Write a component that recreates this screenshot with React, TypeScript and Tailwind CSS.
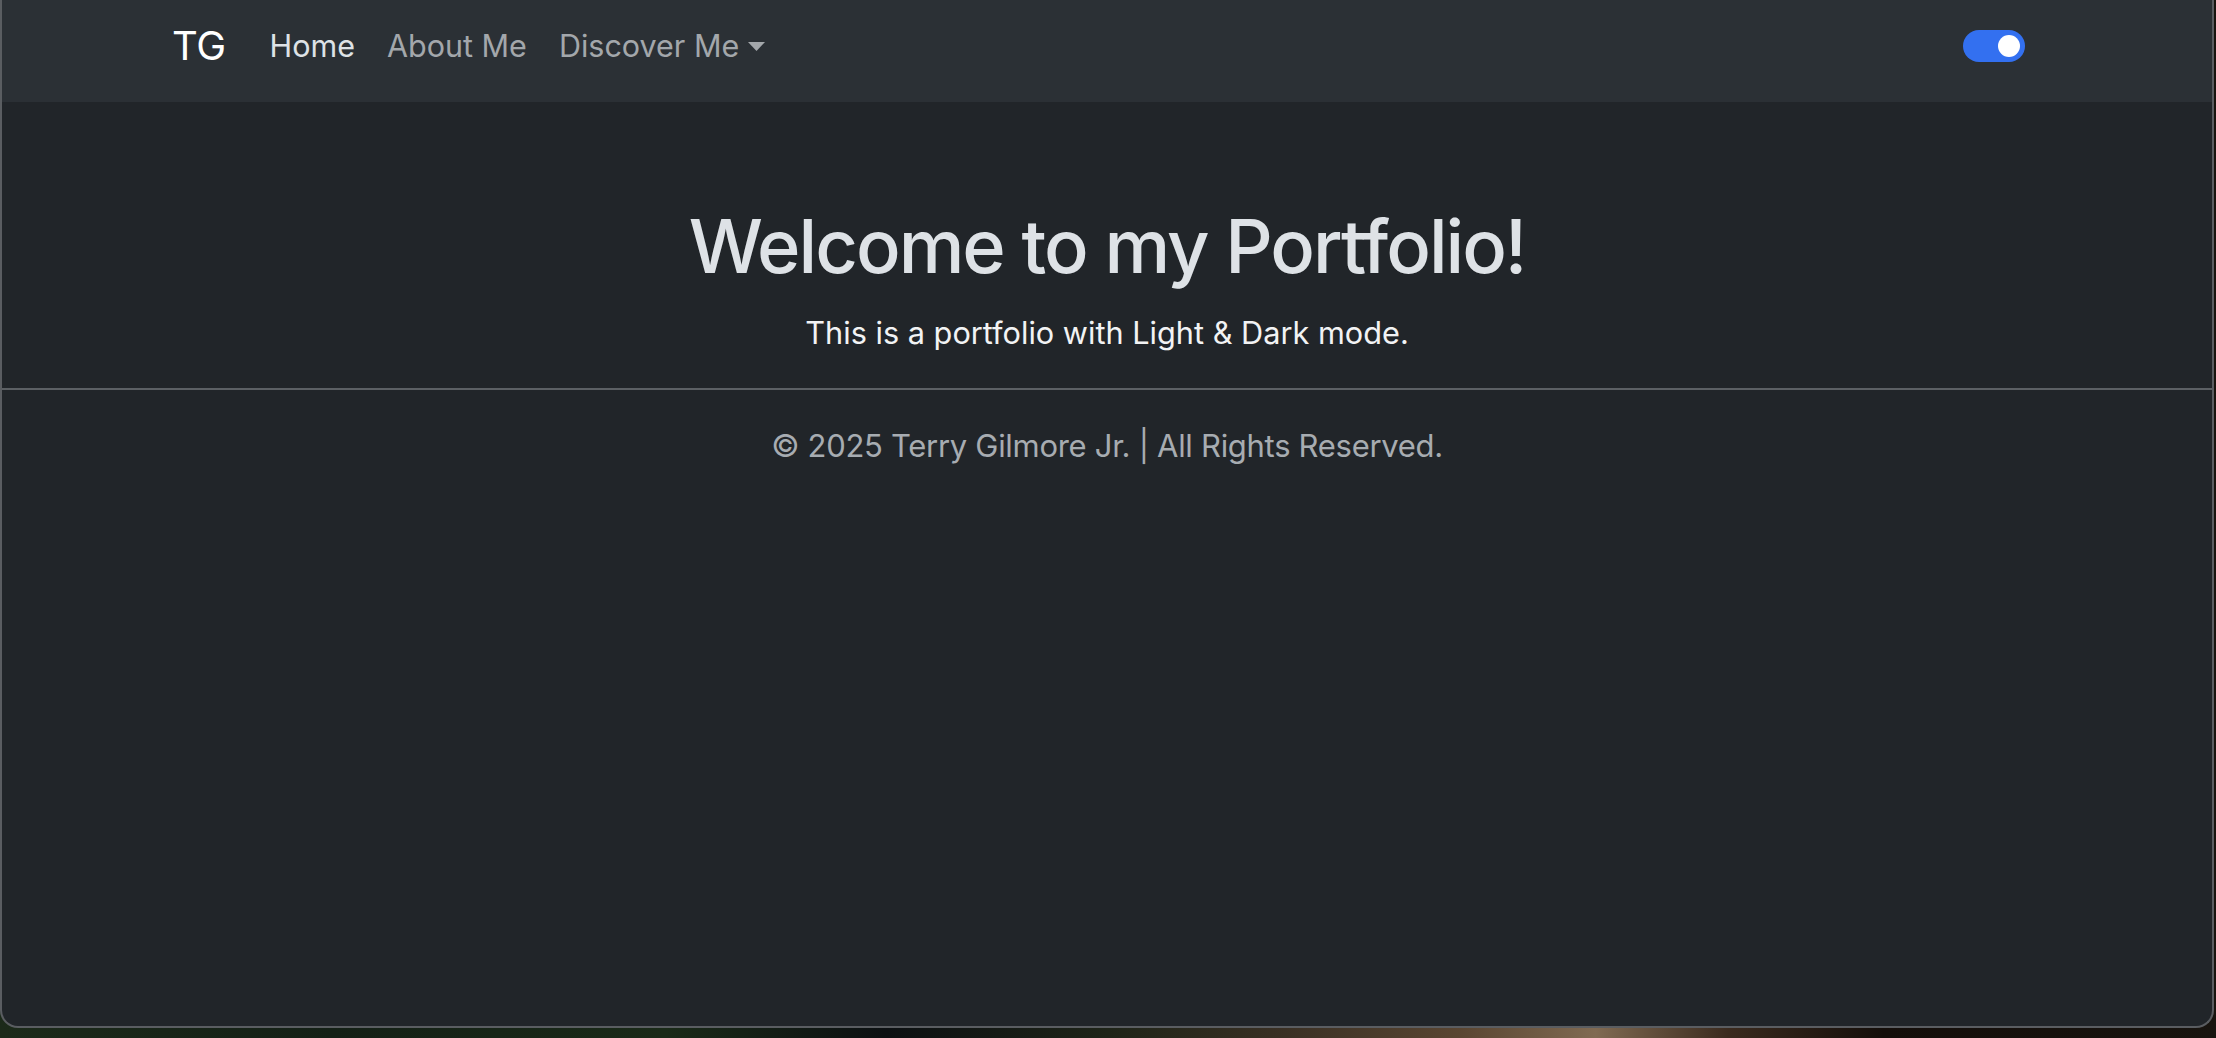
import React from "react";

export default function App() {
  return (
    <div
      className="relative w-[2216px] h-[1038px] overflow-hidden bg-[linear-gradient(90deg,#1c2a1a_0%,#142016_15%,#1a2a18_30%,#0c1012_40%,#1e2418_50%,#3a3024_58%,#5a4632_66%,#806a52_72%,#3a2a1e_78%,#140e0a_85%,#18140f_100%)]"
      style={{ fontFamily: "Inter, 'Noto Sans', 'Liberation Sans', sans-serif" }}
    >
      <div className="w-[2214px] h-[1028px] bg-[#212529] border-x-2 border-b-2 border-[#5a5d61] rounded-b-[18px] overflow-hidden flex flex-col">
        {/* Navbar */}
        <nav className="h-[102px] shrink-0 bg-[#2b3035] flex items-center pl-[170px] pr-[187px] pb-[10px]">
          <span className="text-[40px] leading-none text-white mr-[44px] tracking-[-0.5px]">TG</span>
          <div className="flex items-center gap-[32px] text-[30.5px] leading-none">
            <span className="text-[#dee2e6]">Home</span>
            <span className="text-[#a3a7ab]">About Me</span>
            <span className="text-[#a3a7ab] flex items-center">
              Discover Me
              <svg width="17" height="9" viewBox="0 0 17 9" className="ml-[9px] mt-[1px]">
                <polygon points="0,0 17,0 8.5,9" fill="#a3a7ab" />
              </svg>
            </span>
          </div>
          <div className="ml-auto">
            <div className="w-[62px] h-[32px] rounded-full bg-[#3370f0] flex items-center justify-end pr-[5px]">
              <div className="w-[22px] h-[22px] rounded-full bg-white" />
            </div>
          </div>
        </nav>

        {/* Main */}
        <main className="flex flex-col items-center">
          <h1 className="mt-[100px] text-[74px] leading-[88px] font-medium text-[#dee2e6] tracking-[-2px]">
            Welcome to my Portfolio!
          </h1>
          <p className="mt-[20px] text-[30.7px] leading-[46px] text-[#f2f3f4]">
            This is a portfolio with Light &amp; Dark mode.
          </p>
        </main>
        <div className="mt-[32px] h-[2px] w-full bg-[#5c6064]" />
        <footer className="mt-[32px] text-center text-[31px] leading-[48px] text-[#a7acb1] tracking-[-0.3px]">
          © 2025 Terry Gilmore Jr. | All Rights Reserved.
        </footer>
      </div>
    </div>
  );
}
